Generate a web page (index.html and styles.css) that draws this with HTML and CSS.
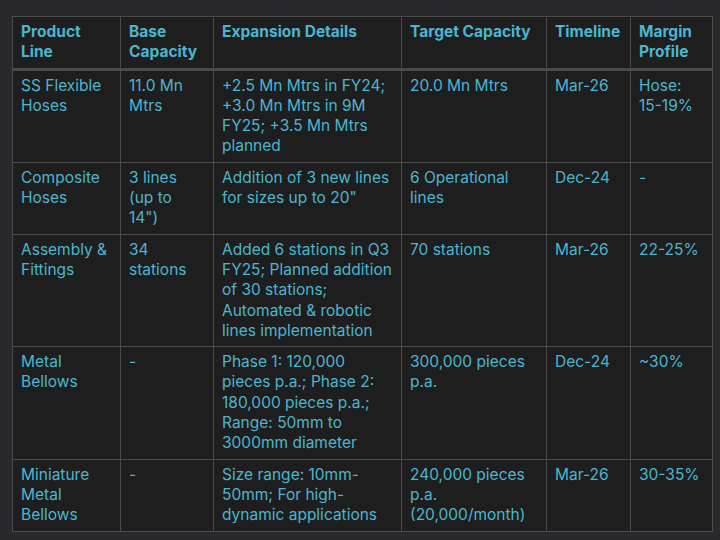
FILE: index.html
```html
<!DOCTYPE html>
<html>
<head>
<meta charset="utf-8">
<link rel="stylesheet" href="styles.css">
</head>
<body>
<table class="cap">
<colgroup>
<col class="c1"><col class="c2"><col class="c3"><col class="c4"><col class="c5"><col class="c6">
</colgroup>
<thead>
<tr><th>Product Line</th><th>Base Capacity</th><th>Expansion Details</th><th>Target Capacity</th><th>Timeline</th><th>Margin Profile</th></tr>
</thead>
<tbody>
<tr><td>SS Flexible Hoses</td><td>11.0 Mn Mtrs</td><td>+2.5 Mn Mtrs in FY24; +3.0 Mn Mtrs in 9M FY25; +3.5 Mn Mtrs planned</td><td>20.0 Mn Mtrs</td><td>Mar-26</td><td>Hose: 15-19%</td></tr>
<tr><td>Composite Hoses</td><td>3 lines (up to 14")</td><td>Addition of 3 new lines for sizes up to 20"</td><td>6 Operational lines</td><td>Dec-24</td><td>-</td></tr>
<tr><td>Assembly &amp; Fittings</td><td>34 stations</td><td>Added 6 stations in Q3 FY25; Planned addition of 30 stations; Automated &amp; robotic lines implementation</td><td>70 stations</td><td>Mar-26</td><td>22-25%</td></tr>
<tr><td>Metal Bellows</td><td>-</td><td>Phase 1: 120,000 pieces p.a.; Phase 2: 180,000 pieces p.a.; Range: 50mm to 3000mm diameter</td><td>300,000 pieces p.a.</td><td>Dec-24</td><td>~30%</td></tr>
<tr><td>Miniature Metal Bellows</td><td>-</td><td>Size range: 10mm-50mm; For high-dynamic applications</td><td>240,000 pieces p.a. (20,000/month)</td><td>Mar-26</td><td>30-35%</td></tr>
</tbody>
</table>
</body>
</html>
```
FILE: styles.css
```css
html, body {
  background: #29292d;
}
body {
  margin: 16px 0 0 12px;
  font-family: Inter, "Noto Sans", sans-serif;
  font-size: 15.5px;
  line-height: 20.3px;
  color: #4bb6d0;
}
.cap {
  border-collapse: collapse;
  table-layout: fixed;
  width: 700px;
  background: #1e1e1e;
}
.c1 { width: 108px; }
.c2 { width: 93px; }
.c3 { width: 188px; }
.c4 { width: 145px; }
.c5 { width: 84px; }
.c6 { width: 82px; }
th, td {
  border: 1px solid #4b4b4b;
  padding: 5px 8px;
  text-align: left;
  vertical-align: top;
}
th {
  font-weight: 700;
  border-bottom: 3px solid #4b4b4b;
}
```
